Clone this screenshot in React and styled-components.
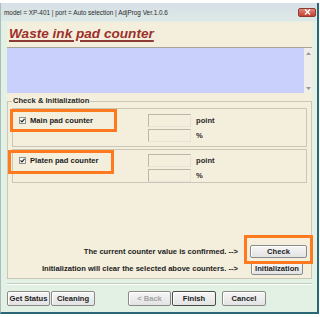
import React from "react";
import styled, { createGlobalStyle } from "styled-components";

const GlobalStyle = createGlobalStyle`
	html, body {
		margin: 0;
		padding: 0;
		background: #ffffff;
		font-family: "Liberation Sans", Arial, sans-serif;
	}
`;

const counters = [
	{ id: "main", label: "Main pad counter", pad: "5px 0 4px" },
	{ id: "platen", label: "Platen pad counter", pad: "4px 0 0" },
];

function CheckMark() {
	return (
		<StCheck>
			<svg width="5" height="5" viewBox="0 0 5 5">
				<path d="M0.5 2.3 L2 3.8 L4.6 0.8" fill="none" stroke="#222" strokeWidth="1.2" />
			</svg>
		</StCheck>
	);
}

function Arrow({ up }) {
	return (
		<svg width="5" height="3" viewBox="0 0 5 3">
			<path d={up ? "M0 3 L2.5 0 L5 3 Z" : "M0 0 L2.5 3 L5 0 Z"} fill="#9a9a9a" />
		</svg>
	);
}

function App() {
	return (
		<StWindow>
			<GlobalStyle />
			<StTitleBar>
				<StTitle>model = XP-401 | port = Auto selection | AdjProg Ver.1.0.6</StTitle>
				<StClose>
					<svg width="7" height="6" viewBox="0 0 7 6">
						<path d="M1 0.5 L6 5.5 M6 0.5 L1 5.5" stroke="#fff" strokeWidth="1.4" />
					</svg>
				</StClose>
			</StTitleBar>

			<StClient>
				<StPanel>
					<StHeader>
						<StHeading>Waste ink pad counter</StHeading>
					</StHeader>
					<StMemo>
						<StScroll>
							<Arrow up />
							<Arrow />
						</StScroll>
					</StMemo>

					<StGroup>
						<StLegend>Check &amp; Initialization</StLegend>
						{counters.map((c) => (
							<StSubGroup key={c.id} pad={c.pad}>
								<StCounterName>
									<CheckMark />
									{c.label}
								</StCounterName>
								<StField />
								<StUnit>point</StUnit>
								<span />
								<StField />
								<StUnit>%</StUnit>
							</StSubGroup>
						))}

						<StActions>
							<StActionText>The current counter value is confirmed. --&gt;</StActionText>
							<StButton width="57px">Check</StButton>
							<StActionText>Initialization will clear the selected above counters. --&gt;</StActionText>
							<StButton width="52px" offset="1px">
								Initialization
							</StButton>
						</StActions>
					</StGroup>
				</StPanel>

				<StSeparator />

				<StButtonBar>
					<StButton width="43px" height="15px">Get Status</StButton>
					<StButton width="44px" height="15px">Cleaning</StButton>
					<StButton width="43px" height="15px" offset="32px" disabled>
						&lt; Back
					</StButton>
					<StButton width="44px" height="15px" isDefault>
						Finish
					</StButton>
					<StButton width="44px" height="15px" offset="5px">
						Cancel
					</StButton>
				</StButtonBar>
			</StClient>

			<StMark left="9px" top="106px" width="107px" height="23px" />
			<StMark left="7px" top="147px" width="106px" height="24px" />
			<StMark left="243px" top="232px" width="69px" height="29px" />
		</StWindow>
	);
}

export default App;

const StWindow = styled.div`
	position: relative;
	box-sizing: border-box;
	width: 319px;
	margin-top: 3px;
	background: #e2f1e3;
	border-left: 1px solid #a9bcbf;
	border-right: 2px solid #2b6877;
	border-bottom: 2px solid #2b6877;
	font-size: 7.6px;
	font-weight: 700;
	color: #1c1c1c;
`;

const StTitleBar = styled.div`
	display: flex;
	justify-content: space-between;
	align-items: center;
	height: 18px;
	padding: 0 1px 0 3px;
	background: linear-gradient(#d6e0e6, #dde9e6);
`;

const StTitle = styled.span`
	font-size: 6.4px;
	font-weight: 400;
	color: #2a2a2a;
`;

const StClose = styled.div`
	display: flex;
	align-items: center;
	justify-content: center;
	width: 18px;
	height: 9px;
	border-radius: 2px;
	background: linear-gradient(#e0877a, #c4402f);
	border: 1px solid #8d3a30;
	box-sizing: border-box;
`;

const StClient = styled.div`
	padding: 1px 5px 6px 6px;
`;

const StPanel = styled.div`
	display: flex;
	flex-direction: column;
	height: 257px;
	background: #f4efdc;
`;

const StHeader = styled.div`
	height: 25px;
	padding-left: 2px;
	border-bottom: 1px solid #a8a498;
`;

const StHeading = styled.h1`
	margin: 0;
	padding-top: 4px;
	font-size: 13.6px;
	font-style: italic;
	font-weight: 700;
	line-height: 16px;
	color: #9d302b;
	text-decoration: underline;
	text-decoration-thickness: 1.5px;
	text-underline-offset: 2px;
	text-decoration-color: #8e3b34;
`;

const StMemo = styled.div`
	display: flex;
	justify-content: flex-end;
	height: 45px;
	background: #c9d0fb;
`;

const StScroll = styled.div`
	display: flex;
	flex-direction: column;
	justify-content: space-between;
	align-items: center;
	width: 8px;
	padding: 4px 0 3px;
	background: #efeee9;
`;

const StGroup = styled.fieldset`
	flex: 1;
	display: flex;
	flex-direction: column;
	margin: 3px 0 0;
	padding: 0 4px 3px;
	border: 1px solid #cbc7b8;
	min-width: 0;
`;

const StLegend = styled.legend`
	padding: 0 1px;
	line-height: 10px;
	color: #2a2a2a;
`;

const StSubGroup = styled.div`
	display: grid;
	grid-template-columns: 124px 43px auto;
	column-gap: 5px;
	row-gap: 2px;
	align-items: center;
	margin-top: 2px;
	padding: ${({ pad }) => pad};
	padding-left: 6px;
	border: 1px solid #cbc7b8;
`;

const StCounterName = styled.div`
	display: flex;
	align-items: center;
	gap: 4px;
`;

const StCheck = styled.span`
	display: flex;
	align-items: center;
	justify-content: center;
	width: 7px;
	height: 7px;
	box-sizing: border-box;
	border: 1px solid #8f8f8f;
	background: #fbfbfb;
`;

const StField = styled.div`
	height: 13px;
	box-sizing: border-box;
	border: 1px solid #b9b6aa;
	border-right-color: #e6e3d8;
	border-bottom-color: #e6e3d8;
	background: #f4efdc;
`;

const StUnit = styled.span`
	color: #2a2a2a;
`;

const StActions = styled.div`
	display: grid;
	grid-template-columns: 1fr 57px;
	column-gap: 12px;
	row-gap: 4px;
	align-items: center;
	margin-top: auto;
`;

const StActionText = styled.span`
	text-align: right;
`;

const StButton = styled.button`
	box-sizing: border-box;
	width: ${({ width }) => width};
	height: ${({ height }) => height || "13px"};
	margin: 0 0 0 ${({ offset }) => offset || "0"};
	padding: 0;
	font-family: "Liberation Sans", Arial, sans-serif;
	font-size: 7.6px;
	font-weight: 700;
	color: ${({ disabled }) => (disabled ? "#a3a3a3" : "#1c1c1c")};
	background: linear-gradient(#f6f6f6, #e3e3e3);
	border: 1px solid ${({ isDefault }) => (isDefault ? "#4c4c4c" : "#8a8a8a")};
	border-radius: 2px;
	box-shadow: inset 1px 1px 0 #ffffff;
`;

const StSeparator = styled.div`
	margin-top: 4px;
	height: 1px;
	background: #c3cdc5;
	border-bottom: 1px solid #fafffa;
`;

const StButtonBar = styled.div`
	display: flex;
	align-items: center;
	gap: 1px;
	margin-top: 6px;
`;

const StMark = styled.div`
	position: absolute;
	left: ${({ left }) => left};
	top: ${({ top }) => top};
	width: ${({ width }) => width};
	height: ${({ height }) => height};
	box-sizing: border-box;
	border: 3px solid #ff7a1f;
	pointer-events: none;
`;
